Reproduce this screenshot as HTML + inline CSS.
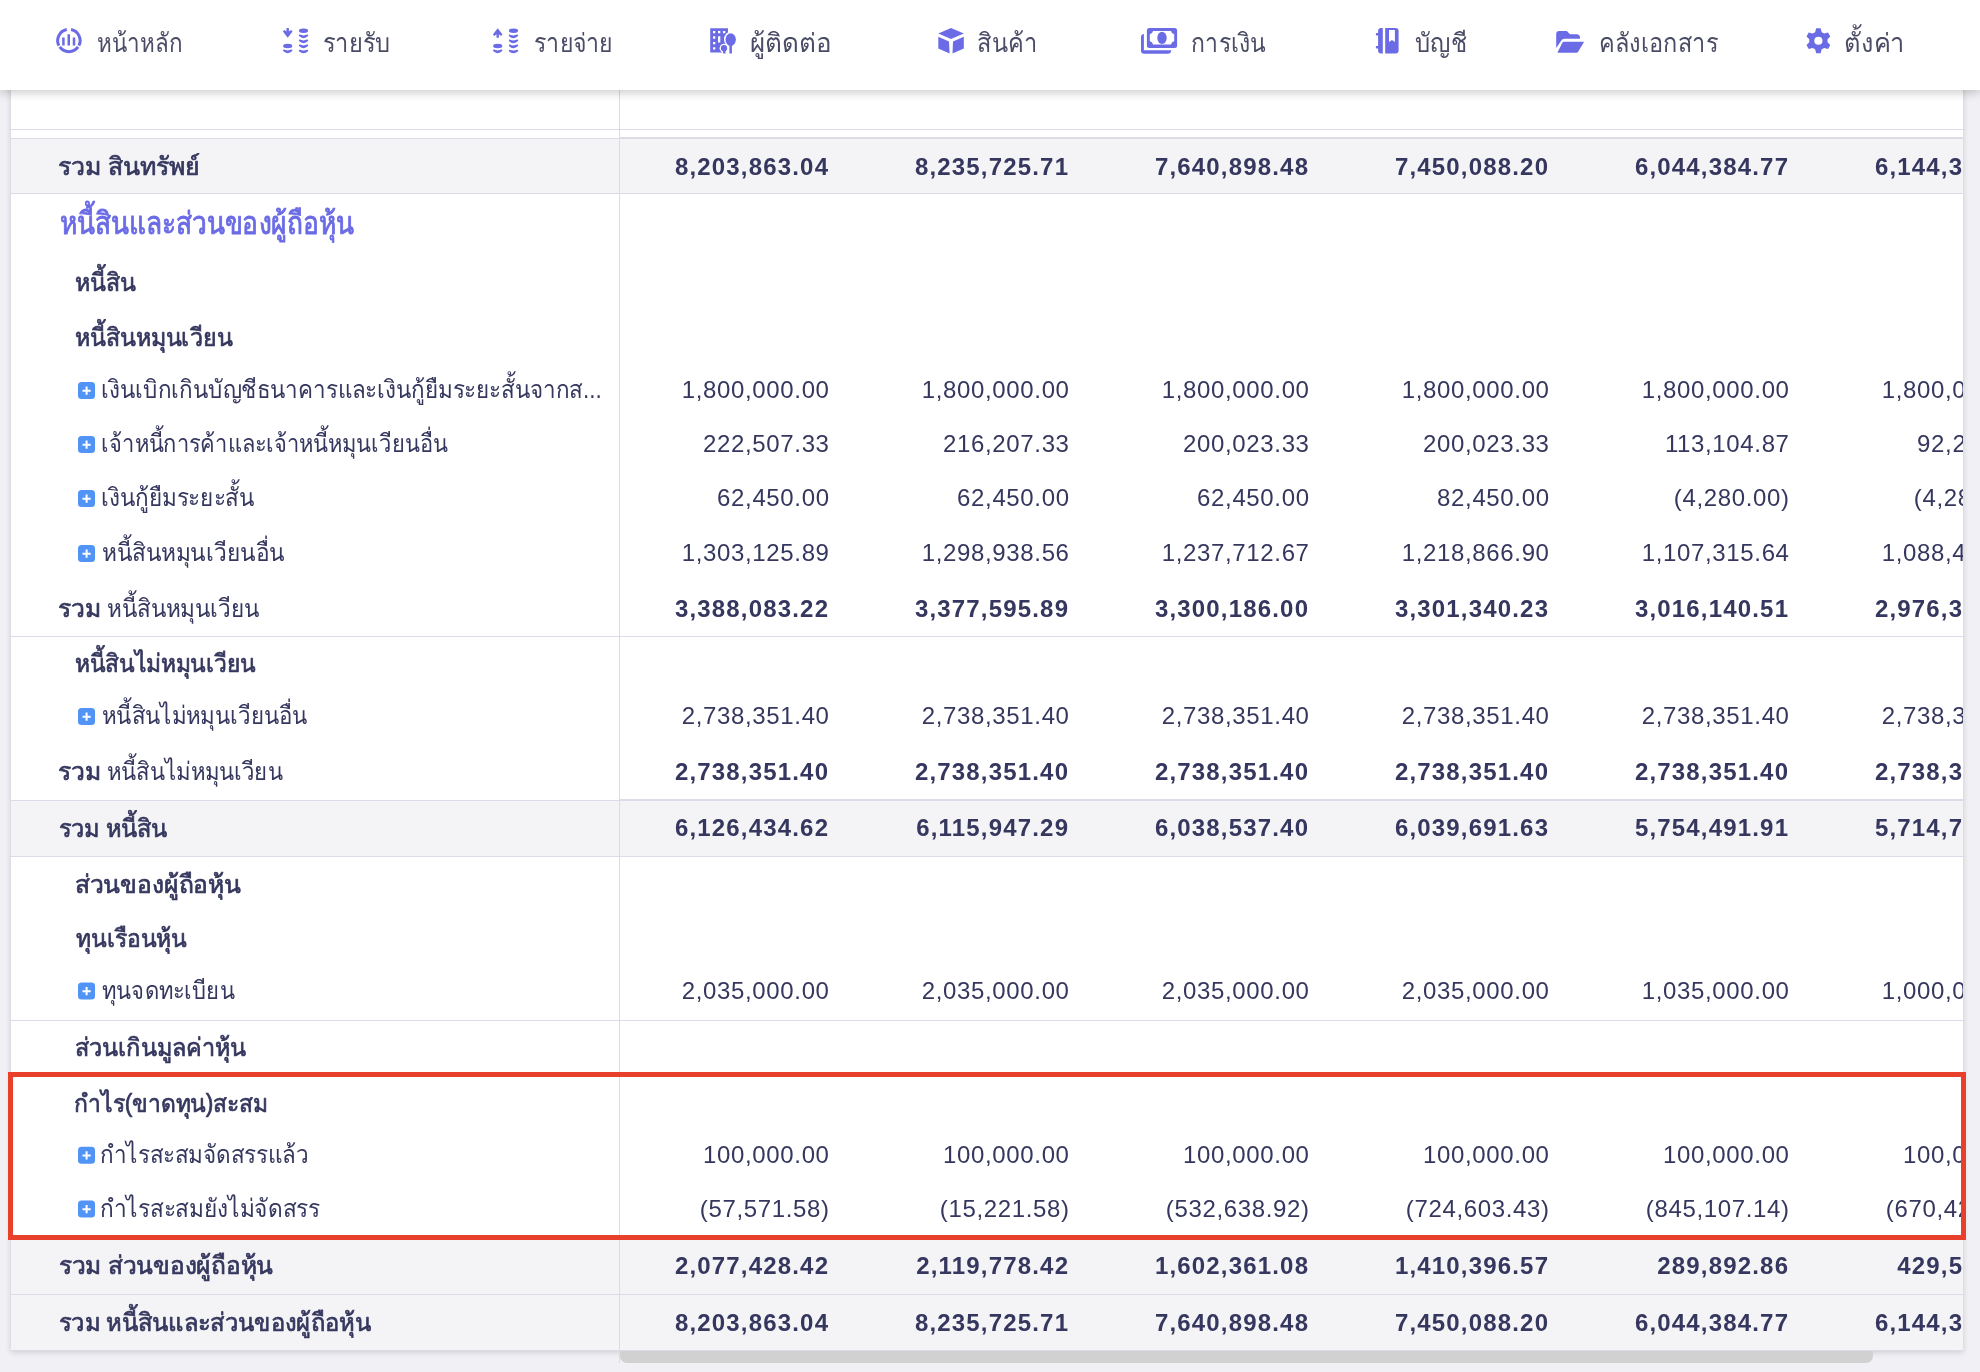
<!DOCTYPE html>
<html><head><meta charset="utf-8"><title>Balance sheet</title>
<style>
html,body{margin:0;padding:0;}
body{width:1980px;height:1372px;overflow:hidden;background:#f1f0f5;position:relative;font-family:'Liberation Sans', sans-serif;}
.abs{position:absolute;}
#card{left:11px;top:0;width:1952px;height:1350px;background:#fff;box-shadow:0 2px 6px rgba(40,40,60,0.2);}
.gray{position:absolute;background:#f4f4f7;}
.hl{position:absolute;height:1px;background:#dcdbe7;}
#nav{left:0;top:0;width:1980px;height:90px;background:#fff;box-shadow:0 3px 9px rgba(0,0,0,0.2);}
svg{position:absolute;left:0;top:0;overflow:visible;will-change:transform;}
#red{left:8px;top:1072px;width:1948px;height:158px;border:5px solid #e8402a;}
#sb{left:620px;top:1351px;width:1253px;height:12px;background:#d1d1d1;border-radius:0 0 7px 7px;}
</style></head><body>
<div id="card" class="abs"></div>

<div class="gray" style="left:11px;top:138px;width:1952px;height:55px"></div>
<div class="gray" style="left:11px;top:800px;width:1952px;height:56px"></div>
<div class="gray" style="left:11px;top:1239px;width:1952px;height:55px"></div>
<div class="gray" style="left:11px;top:1295px;width:1952px;height:55px"></div>
<div class="hl" style="left:11px;top:129px;width:1952px"></div>
<div class="hl" style="left:11px;top:193px;width:1952px"></div>
<div class="hl" style="left:11px;top:636px;width:1952px"></div>
<div class="hl" style="left:11px;top:856px;width:1952px"></div>
<div class="hl" style="left:11px;top:1020px;width:1952px"></div>
<div class="hl" style="left:11px;top:1294px;width:1952px"></div>
<div class="hl" style="left:11px;top:138px;width:608px"></div>
<div class="hl" style="left:620px;top:137px;width:1343px;height:2px"></div>
<div class="hl" style="left:11px;top:800px;width:608px"></div>
<div class="hl" style="left:620px;top:799px;width:1343px;height:2px"></div>
<div class="hl" style="left:11px;top:1350px;width:1952px"></div>
<div class="abs" style="left:619px;top:90px;width:1px;height:1273px;background:#dcdbe7"></div>
<div id="sb" class="abs"></div>
<svg width="1980" height="1372" font-family="'Liberation Sans', sans-serif">
<defs><clipPath id="cc"><rect x="0" y="0" width="1963" height="1372"/></clipPath></defs>
<text x="58.2" y="175.0" font-size="25" font-weight="normal" fill="#35375e" stroke="#35375e" stroke-width="0.70" stroke-linejoin="round" textLength="141.5" lengthAdjust="spacingAndGlyphs">รวม สินทรัพย์</text>
<text x="59.8" y="234.0" font-size="31" font-weight="normal" fill="#6b6be6" stroke="#6b6be6" stroke-width="0.87" stroke-linejoin="round" textLength="294.0" lengthAdjust="spacingAndGlyphs">หนี้สินและส่วนของผู้ถือหุ้น</text>
<text x="75.2" y="291.0" font-size="25" font-weight="normal" fill="#35375e" stroke="#35375e" stroke-width="0.70" stroke-linejoin="round" textLength="60.5" lengthAdjust="spacingAndGlyphs">หนี้สิน</text>
<text x="75.2" y="346.0" font-size="25" font-weight="normal" fill="#35375e" stroke="#35375e" stroke-width="0.70" stroke-linejoin="round" textLength="157.5" lengthAdjust="spacingAndGlyphs">หนี้สินหมุนเวียน</text>
<text x="101.2" y="398.0" font-size="25" font-weight="normal" fill="#35375e" textLength="500.5" lengthAdjust="spacingAndGlyphs">เงินเบิกเกินบัญชีธนาคารและเงินกู้ยืมระยะสั้นจากส...</text>
<text x="101.2" y="452.0" font-size="25" font-weight="normal" fill="#35375e" textLength="346.5" lengthAdjust="spacingAndGlyphs">เจ้าหนี้การค้าและเจ้าหนี้หมุนเวียนอื่น</text>
<text x="101.2" y="506.0" font-size="25" font-weight="normal" fill="#35375e" textLength="153.0" lengthAdjust="spacingAndGlyphs">เงินกู้ยืมระยะสั้น</text>
<text x="102.2" y="561.0" font-size="25" font-weight="normal" fill="#35375e" textLength="182.7" lengthAdjust="spacingAndGlyphs">หนี้สินหมุนเวียนอื่น</text>
<text x="58.2" y="617.0" font-size="25" font-weight="normal" fill="#35375e" stroke="#35375e" stroke-width="0.70" stroke-linejoin="round" textLength="42.6" lengthAdjust="spacingAndGlyphs">รวม</text>
<text x="107.2" y="617.0" font-size="25" font-weight="normal" fill="#35375e" textLength="152.5" lengthAdjust="spacingAndGlyphs">หนี้สินหมุนเวียน</text>
<text x="75.2" y="672.0" font-size="25" font-weight="normal" fill="#35375e" stroke="#35375e" stroke-width="0.70" stroke-linejoin="round" textLength="180.7" lengthAdjust="spacingAndGlyphs">หนี้สินไม่หมุนเวียน</text>
<text x="102.2" y="724.0" font-size="25" font-weight="normal" fill="#35375e" textLength="205.5" lengthAdjust="spacingAndGlyphs">หนี้สินไม่หมุนเวียนอื่น</text>
<text x="58.2" y="780.0" font-size="25" font-weight="normal" fill="#35375e" stroke="#35375e" stroke-width="0.70" stroke-linejoin="round" textLength="42.6" lengthAdjust="spacingAndGlyphs">รวม</text>
<text x="107.2" y="780.0" font-size="25" font-weight="normal" fill="#35375e" textLength="175.5" lengthAdjust="spacingAndGlyphs">หนี้สินไม่หมุนเวียน</text>
<text x="58.8" y="837.0" font-size="25" font-weight="normal" fill="#35375e" stroke="#35375e" stroke-width="0.70" stroke-linejoin="round" textLength="108.7" lengthAdjust="spacingAndGlyphs">รวม หนี้สิน</text>
<text x="74.8" y="892.5" font-size="25" font-weight="normal" fill="#35375e" stroke="#35375e" stroke-width="0.70" stroke-linejoin="round" textLength="166.0" lengthAdjust="spacingAndGlyphs">ส่วนของผู้ถือหุ้น</text>
<text x="76.2" y="946.5" font-size="25" font-weight="normal" fill="#35375e" stroke="#35375e" stroke-width="0.70" stroke-linejoin="round" textLength="110.4" lengthAdjust="spacingAndGlyphs">ทุนเรือนหุ้น</text>
<text x="102.2" y="998.5" font-size="25" font-weight="normal" fill="#35375e" textLength="132.4" lengthAdjust="spacingAndGlyphs">ทุนจดทะเบียน</text>
<text x="74.8" y="1056.0" font-size="25" font-weight="normal" fill="#35375e" stroke="#35375e" stroke-width="0.70" stroke-linejoin="round" textLength="171.0" lengthAdjust="spacingAndGlyphs">ส่วนเกินมูลค่าหุ้น</text>
<text x="74.4" y="1111.7" font-size="25" font-weight="normal" fill="#35375e" stroke="#35375e" stroke-width="0.70" stroke-linejoin="round" textLength="193.2" lengthAdjust="spacingAndGlyphs">กำไร(ขาดทุน)สะสม</text>
<text x="100.2" y="1162.7" font-size="25" font-weight="normal" fill="#35375e" textLength="208.0" lengthAdjust="spacingAndGlyphs">กำไรสะสมจัดสรรแล้ว</text>
<text x="100.2" y="1216.5" font-size="25" font-weight="normal" fill="#35375e" textLength="219.5" lengthAdjust="spacingAndGlyphs">กำไรสะสมยังไม่จัดสรร</text>
<text x="58.8" y="1274.0" font-size="25" font-weight="normal" fill="#35375e" stroke="#35375e" stroke-width="0.70" stroke-linejoin="round" textLength="214.4" lengthAdjust="spacingAndGlyphs">รวม ส่วนของผู้ถือหุ้น</text>
<text x="58.8" y="1331.0" font-size="25" font-weight="normal" fill="#35375e" stroke="#35375e" stroke-width="0.70" stroke-linejoin="round" textLength="312.0" lengthAdjust="spacingAndGlyphs">รวม หนี้สินและส่วนของผู้ถือหุ้น</text>
<rect x="78" y="382.0" width="17" height="17" rx="3.5" fill="#5194f5"/><path d="M86.6 386.6v8.2M82.5 390.7h8.2" stroke="#fff" stroke-width="2"/>
<rect x="78" y="436.0" width="17" height="17" rx="3.5" fill="#5194f5"/><path d="M86.6 440.6v8.2M82.5 444.7h8.2" stroke="#fff" stroke-width="2"/>
<rect x="78" y="490.0" width="17" height="17" rx="3.5" fill="#5194f5"/><path d="M86.6 494.6v8.2M82.5 498.7h8.2" stroke="#fff" stroke-width="2"/>
<rect x="78" y="545.0" width="17" height="17" rx="3.5" fill="#5194f5"/><path d="M86.6 549.6v8.2M82.5 553.7h8.2" stroke="#fff" stroke-width="2"/>
<rect x="78" y="708.0" width="17" height="17" rx="3.5" fill="#5194f5"/><path d="M86.6 712.6v8.2M82.5 716.7h8.2" stroke="#fff" stroke-width="2"/>
<rect x="78" y="982.5" width="17" height="17" rx="3.5" fill="#5194f5"/><path d="M86.6 987.1v8.2M82.5 991.2h8.2" stroke="#fff" stroke-width="2"/>
<rect x="78" y="1146.7" width="17" height="17" rx="3.5" fill="#5194f5"/><path d="M86.6 1151.3v8.2M82.5 1155.4h8.2" stroke="#fff" stroke-width="2"/>
<rect x="78" y="1200.5" width="17" height="17" rx="3.5" fill="#5194f5"/><path d="M86.6 1205.1v8.2M82.5 1209.2h8.2" stroke="#fff" stroke-width="2"/>
<g clip-path="url(#cc)">
<text x="829.18" y="175.0" font-size="24" font-weight="bold" fill="#35375e" text-anchor="end" letter-spacing="1.18">8,203,863.04</text>
<text x="1069.18" y="175.0" font-size="24" font-weight="bold" fill="#35375e" text-anchor="end" letter-spacing="1.18">8,235,725.71</text>
<text x="1309.18" y="175.0" font-size="24" font-weight="bold" fill="#35375e" text-anchor="end" letter-spacing="1.18">7,640,898.48</text>
<text x="1549.18" y="175.0" font-size="24" font-weight="bold" fill="#35375e" text-anchor="end" letter-spacing="1.18">7,450,088.20</text>
<text x="1789.18" y="175.0" font-size="24" font-weight="bold" fill="#35375e" text-anchor="end" letter-spacing="1.18">6,044,384.77</text>
<text x="2029.18" y="175.0" font-size="24" font-weight="bold" fill="#35375e" text-anchor="end" letter-spacing="1.18">6,144,384.77</text>
<text x="829.64" y="398.0" font-size="24" font-weight="normal" fill="#35375e" text-anchor="end" letter-spacing="0.64">1,800,000.00</text>
<text x="1069.64" y="398.0" font-size="24" font-weight="normal" fill="#35375e" text-anchor="end" letter-spacing="0.64">1,800,000.00</text>
<text x="1309.64" y="398.0" font-size="24" font-weight="normal" fill="#35375e" text-anchor="end" letter-spacing="0.64">1,800,000.00</text>
<text x="1549.64" y="398.0" font-size="24" font-weight="normal" fill="#35375e" text-anchor="end" letter-spacing="0.64">1,800,000.00</text>
<text x="1789.64" y="398.0" font-size="24" font-weight="normal" fill="#35375e" text-anchor="end" letter-spacing="0.64">1,800,000.00</text>
<text x="2029.64" y="398.0" font-size="24" font-weight="normal" fill="#35375e" text-anchor="end" letter-spacing="0.64">1,800,000.00</text>
<text x="829.64" y="452.0" font-size="24" font-weight="normal" fill="#35375e" text-anchor="end" letter-spacing="0.64">222,507.33</text>
<text x="1069.64" y="452.0" font-size="24" font-weight="normal" fill="#35375e" text-anchor="end" letter-spacing="0.64">216,207.33</text>
<text x="1309.64" y="452.0" font-size="24" font-weight="normal" fill="#35375e" text-anchor="end" letter-spacing="0.64">200,023.33</text>
<text x="1549.64" y="452.0" font-size="24" font-weight="normal" fill="#35375e" text-anchor="end" letter-spacing="0.64">200,023.33</text>
<text x="1789.64" y="452.0" font-size="24" font-weight="normal" fill="#35375e" text-anchor="end" letter-spacing="0.64">113,104.87</text>
<text x="2029.64" y="452.0" font-size="24" font-weight="normal" fill="#35375e" text-anchor="end" letter-spacing="0.64">92,207.33</text>
<text x="829.64" y="506.0" font-size="24" font-weight="normal" fill="#35375e" text-anchor="end" letter-spacing="0.64">62,450.00</text>
<text x="1069.64" y="506.0" font-size="24" font-weight="normal" fill="#35375e" text-anchor="end" letter-spacing="0.64">62,450.00</text>
<text x="1309.64" y="506.0" font-size="24" font-weight="normal" fill="#35375e" text-anchor="end" letter-spacing="0.64">62,450.00</text>
<text x="1549.64" y="506.0" font-size="24" font-weight="normal" fill="#35375e" text-anchor="end" letter-spacing="0.64">82,450.00</text>
<text x="1789.64" y="506.0" font-size="24" font-weight="normal" fill="#35375e" text-anchor="end" letter-spacing="0.64">(4,280.00)</text>
<text x="2029.64" y="506.0" font-size="24" font-weight="normal" fill="#35375e" text-anchor="end" letter-spacing="0.64">(4,280.00)</text>
<text x="829.64" y="561.0" font-size="24" font-weight="normal" fill="#35375e" text-anchor="end" letter-spacing="0.64">1,303,125.89</text>
<text x="1069.64" y="561.0" font-size="24" font-weight="normal" fill="#35375e" text-anchor="end" letter-spacing="0.64">1,298,938.56</text>
<text x="1309.64" y="561.0" font-size="24" font-weight="normal" fill="#35375e" text-anchor="end" letter-spacing="0.64">1,237,712.67</text>
<text x="1549.64" y="561.0" font-size="24" font-weight="normal" fill="#35375e" text-anchor="end" letter-spacing="0.64">1,218,866.90</text>
<text x="1789.64" y="561.0" font-size="24" font-weight="normal" fill="#35375e" text-anchor="end" letter-spacing="0.64">1,107,315.64</text>
<text x="2029.64" y="561.0" font-size="24" font-weight="normal" fill="#35375e" text-anchor="end" letter-spacing="0.64">1,088,415.64</text>
<text x="829.18" y="617.0" font-size="24" font-weight="bold" fill="#35375e" text-anchor="end" letter-spacing="1.18">3,388,083.22</text>
<text x="1069.18" y="617.0" font-size="24" font-weight="bold" fill="#35375e" text-anchor="end" letter-spacing="1.18">3,377,595.89</text>
<text x="1309.18" y="617.0" font-size="24" font-weight="bold" fill="#35375e" text-anchor="end" letter-spacing="1.18">3,300,186.00</text>
<text x="1549.18" y="617.0" font-size="24" font-weight="bold" fill="#35375e" text-anchor="end" letter-spacing="1.18">3,301,340.23</text>
<text x="1789.18" y="617.0" font-size="24" font-weight="bold" fill="#35375e" text-anchor="end" letter-spacing="1.18">3,016,140.51</text>
<text x="2029.18" y="617.0" font-size="24" font-weight="bold" fill="#35375e" text-anchor="end" letter-spacing="1.18">2,976,340.51</text>
<text x="829.64" y="724.0" font-size="24" font-weight="normal" fill="#35375e" text-anchor="end" letter-spacing="0.64">2,738,351.40</text>
<text x="1069.64" y="724.0" font-size="24" font-weight="normal" fill="#35375e" text-anchor="end" letter-spacing="0.64">2,738,351.40</text>
<text x="1309.64" y="724.0" font-size="24" font-weight="normal" fill="#35375e" text-anchor="end" letter-spacing="0.64">2,738,351.40</text>
<text x="1549.64" y="724.0" font-size="24" font-weight="normal" fill="#35375e" text-anchor="end" letter-spacing="0.64">2,738,351.40</text>
<text x="1789.64" y="724.0" font-size="24" font-weight="normal" fill="#35375e" text-anchor="end" letter-spacing="0.64">2,738,351.40</text>
<text x="2029.64" y="724.0" font-size="24" font-weight="normal" fill="#35375e" text-anchor="end" letter-spacing="0.64">2,738,351.40</text>
<text x="829.18" y="780.0" font-size="24" font-weight="bold" fill="#35375e" text-anchor="end" letter-spacing="1.18">2,738,351.40</text>
<text x="1069.18" y="780.0" font-size="24" font-weight="bold" fill="#35375e" text-anchor="end" letter-spacing="1.18">2,738,351.40</text>
<text x="1309.18" y="780.0" font-size="24" font-weight="bold" fill="#35375e" text-anchor="end" letter-spacing="1.18">2,738,351.40</text>
<text x="1549.18" y="780.0" font-size="24" font-weight="bold" fill="#35375e" text-anchor="end" letter-spacing="1.18">2,738,351.40</text>
<text x="1789.18" y="780.0" font-size="24" font-weight="bold" fill="#35375e" text-anchor="end" letter-spacing="1.18">2,738,351.40</text>
<text x="2029.18" y="780.0" font-size="24" font-weight="bold" fill="#35375e" text-anchor="end" letter-spacing="1.18">2,738,351.40</text>
<text x="829.18" y="836.0" font-size="24" font-weight="bold" fill="#35375e" text-anchor="end" letter-spacing="1.18">6,126,434.62</text>
<text x="1069.18" y="836.0" font-size="24" font-weight="bold" fill="#35375e" text-anchor="end" letter-spacing="1.18">6,115,947.29</text>
<text x="1309.18" y="836.0" font-size="24" font-weight="bold" fill="#35375e" text-anchor="end" letter-spacing="1.18">6,038,537.40</text>
<text x="1549.18" y="836.0" font-size="24" font-weight="bold" fill="#35375e" text-anchor="end" letter-spacing="1.18">6,039,691.63</text>
<text x="1789.18" y="836.0" font-size="24" font-weight="bold" fill="#35375e" text-anchor="end" letter-spacing="1.18">5,754,491.91</text>
<text x="2029.18" y="836.0" font-size="24" font-weight="bold" fill="#35375e" text-anchor="end" letter-spacing="1.18">5,714,791.91</text>
<text x="829.64" y="998.5" font-size="24" font-weight="normal" fill="#35375e" text-anchor="end" letter-spacing="0.64">2,035,000.00</text>
<text x="1069.64" y="998.5" font-size="24" font-weight="normal" fill="#35375e" text-anchor="end" letter-spacing="0.64">2,035,000.00</text>
<text x="1309.64" y="998.5" font-size="24" font-weight="normal" fill="#35375e" text-anchor="end" letter-spacing="0.64">2,035,000.00</text>
<text x="1549.64" y="998.5" font-size="24" font-weight="normal" fill="#35375e" text-anchor="end" letter-spacing="0.64">2,035,000.00</text>
<text x="1789.64" y="998.5" font-size="24" font-weight="normal" fill="#35375e" text-anchor="end" letter-spacing="0.64">1,035,000.00</text>
<text x="2029.64" y="998.5" font-size="24" font-weight="normal" fill="#35375e" text-anchor="end" letter-spacing="0.64">1,000,000.00</text>
<text x="829.64" y="1162.7" font-size="24" font-weight="normal" fill="#35375e" text-anchor="end" letter-spacing="0.64">100,000.00</text>
<text x="1069.64" y="1162.7" font-size="24" font-weight="normal" fill="#35375e" text-anchor="end" letter-spacing="0.64">100,000.00</text>
<text x="1309.64" y="1162.7" font-size="24" font-weight="normal" fill="#35375e" text-anchor="end" letter-spacing="0.64">100,000.00</text>
<text x="1549.64" y="1162.7" font-size="24" font-weight="normal" fill="#35375e" text-anchor="end" letter-spacing="0.64">100,000.00</text>
<text x="1789.64" y="1162.7" font-size="24" font-weight="normal" fill="#35375e" text-anchor="end" letter-spacing="0.64">100,000.00</text>
<text x="2029.64" y="1162.7" font-size="24" font-weight="normal" fill="#35375e" text-anchor="end" letter-spacing="0.64">100,000.00</text>
<text x="829.64" y="1216.5" font-size="24" font-weight="normal" fill="#35375e" text-anchor="end" letter-spacing="0.64">(57,571.58)</text>
<text x="1069.64" y="1216.5" font-size="24" font-weight="normal" fill="#35375e" text-anchor="end" letter-spacing="0.64">(15,221.58)</text>
<text x="1309.64" y="1216.5" font-size="24" font-weight="normal" fill="#35375e" text-anchor="end" letter-spacing="0.64">(532,638.92)</text>
<text x="1549.64" y="1216.5" font-size="24" font-weight="normal" fill="#35375e" text-anchor="end" letter-spacing="0.64">(724,603.43)</text>
<text x="1789.64" y="1216.5" font-size="24" font-weight="normal" fill="#35375e" text-anchor="end" letter-spacing="0.64">(845,107.14)</text>
<text x="2029.64" y="1216.5" font-size="24" font-weight="normal" fill="#35375e" text-anchor="end" letter-spacing="0.64">(670,421.14)</text>
<text x="829.18" y="1274.0" font-size="24" font-weight="bold" fill="#35375e" text-anchor="end" letter-spacing="1.18">2,077,428.42</text>
<text x="1069.18" y="1274.0" font-size="24" font-weight="bold" fill="#35375e" text-anchor="end" letter-spacing="1.18">2,119,778.42</text>
<text x="1309.18" y="1274.0" font-size="24" font-weight="bold" fill="#35375e" text-anchor="end" letter-spacing="1.18">1,602,361.08</text>
<text x="1549.18" y="1274.0" font-size="24" font-weight="bold" fill="#35375e" text-anchor="end" letter-spacing="1.18">1,410,396.57</text>
<text x="1789.18" y="1274.0" font-size="24" font-weight="bold" fill="#35375e" text-anchor="end" letter-spacing="1.18">289,892.86</text>
<text x="2029.18" y="1274.0" font-size="24" font-weight="bold" fill="#35375e" text-anchor="end" letter-spacing="1.18">429,592.86</text>
<text x="829.18" y="1331.0" font-size="24" font-weight="bold" fill="#35375e" text-anchor="end" letter-spacing="1.18">8,203,863.04</text>
<text x="1069.18" y="1331.0" font-size="24" font-weight="bold" fill="#35375e" text-anchor="end" letter-spacing="1.18">8,235,725.71</text>
<text x="1309.18" y="1331.0" font-size="24" font-weight="bold" fill="#35375e" text-anchor="end" letter-spacing="1.18">7,640,898.48</text>
<text x="1549.18" y="1331.0" font-size="24" font-weight="bold" fill="#35375e" text-anchor="end" letter-spacing="1.18">7,450,088.20</text>
<text x="1789.18" y="1331.0" font-size="24" font-weight="bold" fill="#35375e" text-anchor="end" letter-spacing="1.18">6,044,384.77</text>
<text x="2029.18" y="1331.0" font-size="24" font-weight="bold" fill="#35375e" text-anchor="end" letter-spacing="1.18">6,144,384.77</text>
</g></svg>
<div id="nav" class="abs"></div>
<svg width="1980" height="90" font-family="'Liberation Sans', sans-serif">
<text x="97.2" y="52.0" font-size="26" font-weight="normal" fill="#4b4d66" textLength="85.5" lengthAdjust="spacingAndGlyphs">หน้าหลัก</text>
<text x="322.5" y="52.0" font-size="26" font-weight="normal" fill="#4b4d66" textLength="68.3" lengthAdjust="spacingAndGlyphs">รายรับ</text>
<text x="533.8" y="52.0" font-size="26" font-weight="normal" fill="#4b4d66" textLength="79.0" lengthAdjust="spacingAndGlyphs">รายจ่าย</text>
<text x="749.8" y="52.0" font-size="26" font-weight="normal" fill="#4b4d66" textLength="81.9" lengthAdjust="spacingAndGlyphs">ผู้ติดต่อ</text>
<text x="977.2" y="52.0" font-size="26" font-weight="normal" fill="#4b4d66" textLength="60.0" lengthAdjust="spacingAndGlyphs">สินค้า</text>
<text x="1191.2" y="52.0" font-size="26" font-weight="normal" fill="#4b4d66" textLength="75.1" lengthAdjust="spacingAndGlyphs">การเงิน</text>
<text x="1414.8" y="52.0" font-size="26" font-weight="normal" fill="#4b4d66" textLength="52.5" lengthAdjust="spacingAndGlyphs">บัญชี</text>
<text x="1599.2" y="52.0" font-size="26" font-weight="normal" fill="#4b4d66" textLength="119.5" lengthAdjust="spacingAndGlyphs">คลังเอกสาร</text>
<text x="1844.2" y="52.0" font-size="26" font-weight="normal" fill="#4b4d66" textLength="60.6" lengthAdjust="spacingAndGlyphs">ตั้งค่า</text>
<g transform="translate(56,27.5)" fill="none" stroke="#6b6be6" stroke-width="3"><path d="M10.76 2.01A11.2 11.2 0 0 0 2.92 18.08"/><path d="M15.04 2.01A11.2 11.2 0 0 1 22.88 18.08"/><path d="M3.73 19.42A11.2 11.2 0 0 0 22.07 19.42"/><path d="M7.4 18.1V10M12.75 18.1V6.7M18 18.1V10" stroke-width="2.5"/></g>
<g transform="translate(283,28)" fill="#6b6be6" stroke="none"><path d="M3.5 0H5.9V3.6L8.1 1.9 9.5 3.5 4.7 9.7 -0.1 3.5 1.3 1.9 3.5 3.6Z"/><ellipse cx="4.7" cy="18" rx="4.6" ry="2.25"/><path d="M0.1 22.3Q0.1 21.4 1.1 21.6Q4.7 23.2 8.3 21.6Q9.3 21.4 9.3 22.3V23.1Q4.7 27.2 0.1 23.1Z"/><ellipse cx="20.5" cy="2.7" rx="4.6" ry="2.2"/><path d="M15.9 7.3Q15.9 6.4 16.9 6.6Q20.5 8.2 24.1 6.6Q25.1 6.4 25.1 7.3V8.1Q20.5 12.2 15.9 8.1Z"/><path d="M15.9 12.3Q15.9 11.4 16.9 11.6Q20.5 13.2 24.1 11.6Q25.1 11.4 25.1 12.3V13.1Q20.5 17.2 15.9 13.1Z"/><path d="M15.9 17.3Q15.9 16.4 16.9 16.6Q20.5 18.2 24.1 16.6Q25.1 16.4 25.1 17.3V18.1Q20.5 22.2 15.9 18.1Z"/><path d="M15.9 22.4Q15.9 21.5 16.9 21.7Q20.5 23.3 24.1 21.7Q25.1 21.5 25.1 22.4V23.2Q20.5 27.3 15.9 23.2Z"/></g>
<g transform="translate(493,28)" fill="#6b6be6" stroke="none"><path d="M3.5 9.8V6.2L1.3 8.1 -0.1 6.4 4.7 0.3 9.5 6.4 8.1 8.1 5.9 6.2V9.8Z"/><ellipse cx="4.7" cy="18" rx="4.6" ry="2.25"/><path d="M0.1 22.3Q0.1 21.4 1.1 21.6Q4.7 23.2 8.3 21.6Q9.3 21.4 9.3 22.3V23.1Q4.7 27.2 0.1 23.1Z"/><ellipse cx="20.5" cy="2.7" rx="4.6" ry="2.2"/><path d="M15.9 7.3Q15.9 6.4 16.9 6.6Q20.5 8.2 24.1 6.6Q25.1 6.4 25.1 7.3V8.1Q20.5 12.2 15.9 8.1Z"/><path d="M15.9 12.3Q15.9 11.4 16.9 11.6Q20.5 13.2 24.1 11.6Q25.1 11.4 25.1 12.3V13.1Q20.5 17.2 15.9 13.1Z"/><path d="M15.9 17.3Q15.9 16.4 16.9 16.6Q20.5 18.2 24.1 16.6Q25.1 16.4 25.1 17.3V18.1Q20.5 22.2 15.9 18.1Z"/><path d="M15.9 22.4Q15.9 21.5 16.9 21.7Q20.5 23.3 24.1 21.7Q25.1 21.5 25.1 22.4V23.2Q20.5 27.3 15.9 23.2Z"/></g>
<g transform="translate(710,28)"><path fill="#6b6be6" fill-rule="evenodd" d="M0.2 0.2H18V24.6H0.2Z M3 3h2.3v2.3H3Z M8 3h2.3v2.3H8Z M13 3h2.3v2.3H13Z M3 8.2h2.3v2.6H3Z M8 8.2h2.3v6.3H8Z M3 14h2.3v2.2H3Z M3 19.2h2.3v2.4H3Z"/><ellipse cx="20.7" cy="11.6" rx="6.7" ry="7.8" fill="#fff"/><rect x="17.9" y="15" width="5.3" height="11" fill="#fff"/><circle cx="14" cy="20.2" r="4.4" fill="#fff"/><rect x="11.9" y="21" width="6.3" height="5" fill="#fff"/><g fill="#6b6be6"><ellipse cx="20.7" cy="11.6" rx="5.2" ry="6.3"/><path d="M19.4 16h2.5v9.5h-2.5Z"/><circle cx="14" cy="20.2" r="3.1"/><path d="M13.1 21.5h2.4v4h-2.4Z"/></g></g>
<g transform="translate(938,28)" fill="#6b6be6"><path d="M13 0L25.8 5.5 13 11 0.3 5.5Z"/><path d="M0.3 8.7L11 13.4 11.6 25.5 0.3 20.5Z"/><path d="M25.8 8.7L15 13.4 14.5 25.5 25.8 20.5Z"/></g>
<g transform="translate(1141,28)" fill="#6b6be6"><path fill-rule="evenodd" d="M8.4 0H33.6Q36.1 0 36.1 2.5V17.4Q36.1 19.9 33.6 19.9H8.4Q5.9 19.9 5.9 17.4V2.5Q5.9 0 8.4 0Z M12 2.9H30Q30.5 5.8 33.2 6.2V13.3Q30.5 13.7 30 16.6H12Q11.5 13.7 8.8 13.3V6.2Q11.5 5.8 12 2.9Z"/><ellipse cx="21" cy="9.9" rx="4.7" ry="6.1"/><path d="M0 9Q0 6.6 2.9 6.1V22.2H30.3Q30 25.8 26.8 25.8H3Q0 25.8 0 22.8Z"/></g>
<g transform="translate(1375.5,28)" fill="#6b6be6"><path d="M7.3 0V25.5H5.6Q2.6 25.5 2.6 22.5V20.5H1.3Q0.3 20.5 0.3 19.2 0.3 17.9 1.3 17.9H2.6V7.6H1.3Q0.3 7.6 0.3 6.3 0.3 5 1.3 5H2.6V3Q2.6 0 5.6 0Z"/><path fill-rule="evenodd" d="M9.7 0H20Q23.1 0 23.1 3V22.5Q23.1 25.5 20 25.5H9.7Z M13.5 2.1V13.9L16.45 12 19.4 13.9V2.1Z"/></g>
<g transform="translate(1556,28)" fill="#6b6be6"><path d="M0.2 6Q0.2 3 3.2 3H10.8L14 6.3H20.5Q24 6.3 24 9.8V10.8H8.5Q6.2 10.8 5 13L0.2 20Z"/><path d="M7.8 12.9H27.2Q29 12.9 28.5 14.6L22.8 24Q22 25.5 20.2 25.5H2.2Q0.3 25.5 0.9 23.8L5.7 14.5Q6.5 12.9 7.8 12.9Z" stroke="#fff" stroke-width="1.5"/></g>
<g transform="translate(1807,28)" fill="#6b6be6"><path fill-rule="evenodd" d="M8.10 4.15 L9.20 0.30 L13.60 0.30 L14.70 4.15 L17.20 5.59 L21.08 4.62 L23.28 8.43 L20.50 11.31 L20.50 14.19 L23.28 17.07 L21.08 20.88 L17.20 19.91 L14.70 21.35 L13.60 25.20 L9.20 25.20 L8.10 21.35 L5.60 19.91 L1.72 20.88 L-0.48 17.07 L2.30 14.19 L2.30 11.31 L-0.48 8.43 L1.72 4.62 L5.60 5.59Z M15.50 12.75A4.1 4.1 0 1 0 7.30 12.75A4.1 4.1 0 1 0 15.50 12.75Z"/></g>
</svg>
<div id="red" class="abs"></div>
</body></html>
